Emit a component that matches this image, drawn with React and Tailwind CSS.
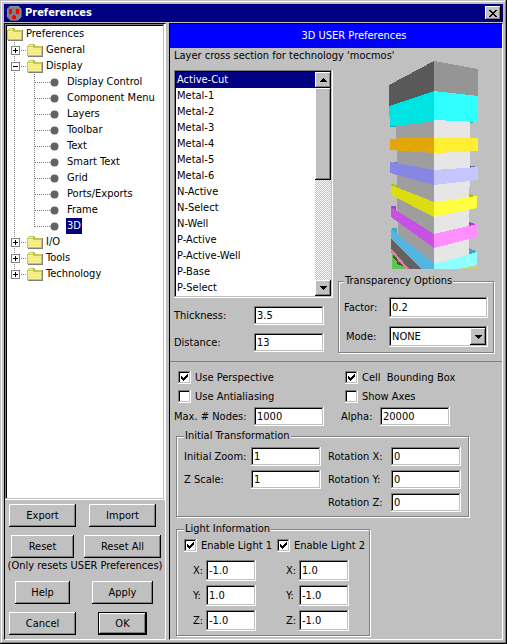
import React, { useState } from "react";

const raised =
  "bg-[#c0c0c0] shadow-[inset_-1px_-1px_0_#000,inset_1px_1px_0_#fff,inset_-2px_-2px_0_#808080]";
const sunken =
  "bg-white shadow-[inset_-1px_-1px_0_#fff,inset_1px_1px_0_#808080,inset_-2px_-2px_0_#c0c0c0,inset_2px_2px_0_#000]";
const panel = "border border-t-black border-l-black border-r-white border-b-white";

const layers = [
  "Active-Cut", "Metal-1", "Metal-2", "Metal-3", "Metal-4", "Metal-5", "Metal-6",
  "N-Active", "N-Select", "N-Well", "P-Active", "P-Active-Well", "P-Base", "P-Select",
];

const displayPages = [
  "Display Control", "Component Menu", "Layers", "Toolbar", "Text",
  "Smart Text", "Grid", "Ports/Exports", "Frame", "3D",
];

function Folder() {
  return (
    <svg width="16" height="16" viewBox="0 0 16 16" shapeRendering="crispEdges" className="shrink-0">
      <path d="M1 4V3h1V2h5v1h1v1h8v11H1z" fill="#808080" />
      <path d="M0 4h1V3h1V2h4v1h1v1h8v10H0z" fill="#c8c84c" />
      <path d="M1 6h13v7H1z" fill="#f7ef8c" />
      <path d="M1 5h5v1H1zM2 3h4v1H2z" fill="#fff9b0" />
      <path d="M3 8h1v1H3zM6 7h1v1H6zM9 8h1v1H9zM11 10h1v1h-1zM5 10h1v1H5zM8 11h1v1H8zM2 11h1v1H2zM12 7h1v1h-1z" fill="#e3d860" />
    </svg>
  );
}

function Expander({ open, last }) {
  return (
    <svg width="20" height="16" viewBox="0 0 20 16" shapeRendering="crispEdges" className="shrink-0">
      <path d={last ? "M7.5 0V4" : "M7.5 0V16"} stroke="#808080" strokeDasharray="1 1" />
      <path d="M14 8.5H20" stroke="#808080" strokeDasharray="1 1" />
      <rect x="4.500" y="4.500" width="8" height="8" fill="#fff" stroke="#808080" />
      <path d={open ? "M6 8.500H11" : "M6 8.500H11M8.500 6V11"} stroke="#000" />
    </svg>
  );
}

function LeafLines({ last }) {
  return (
    <svg width="59" height="16" viewBox="0 0 59 16" className="shrink-0">
      <g stroke="#808080" strokeDasharray="1 1" shapeRendering="crispEdges">
        <path d="M7.5 0V16" />
        <path d={last ? "M27.5 0V9" : "M27.5 0V16"} />
        <path d="M28 8.500H43" />
      </g>
      <circle cx="47.500" cy="8.500" r="4" fill="#636363" />
    </svg>
  );
}

function Branch({ name, open, last, children }) {
  return (
    <li>
      <div className="flex h-4 items-center">
        <Expander open={open} last={last} />
        <Folder />
        <span className="ml-[3px] leading-4">{name}</span>
      </div>
      {children}
    </li>
  );
}

function Tree() {
  return (
    <div className={`h-[476px] overflow-hidden p-[2px] ${sunken}`}>
      <div className="flex h-4 items-center">
        <Folder />
        <span className="ml-[3px] leading-4">Preferences</span>
      </div>
      <ul>
        <Branch name="General" />
        <Branch name="Display" open>
          <ul>
            {displayPages.map((p) => (
              <li key={p} className="flex h-4 items-center">
                <LeafLines last={p === "3D"} />
                <span className={p === "3D" ? "bg-[#000080] px-px leading-4 text-white" : "px-px leading-4"}>{p}</span>
              </li>
            ))}
          </ul>
        </Branch>
        <Branch name="I/O" />
        <Branch name="Tools" />
        <Branch name="Technology" last />
      </ul>
    </div>
  );
}

function Button({ className, children }) {
  return (
    <button type="button" className={`h-[23px] ${raised} ${className}`}>
      {children}
    </button>
  );
}

function Field({ id, label, value, labelClass, inputClass = "h-[19px] w-[70px]" }) {
  return (
    <div className="flex items-center">
      <label htmlFor={id} className={`shrink-0 whitespace-nowrap ${labelClass}`}>{label}</label>
      <input id={id} type="text" defaultValue={value} className={`min-w-0 px-[3px] outline-none ${sunken} ${inputClass}`} />
    </div>
  );
}

function Check({ label, on = false }) {
  const [checked, setChecked] = useState(on);
  return (
    <label className="flex h-[19px] items-center gap-1 whitespace-pre">
      <span className="grid shrink-0">
        <input
          type="checkbox"
          checked={checked}
          onChange={() => setChecked(!checked)}
          className={`col-start-1 row-start-1 size-[13px] appearance-none ${sunken}`}
        />
        {checked && (
          <svg width="13" height="13" viewBox="0 0 13 13" shapeRendering="crispEdges" className="pointer-events-none col-start-1 row-start-1">
            <path d="M3 5h1v1h1v1h1V6h1V5h1V4h1V3h1v3H9v1H8v1H7v1H6v1H5V9H4V8H3z" />
          </svg>
        )}
      </span>
      {label}
    </label>
  );
}

function Arrow({ up }) {
  return (
    <svg width="7" height="4" viewBox="0 0 7 4" shapeRendering="crispEdges">
      <path d={up ? "M3 0h1v1h1v1h1v1h1v1H0V3h1V2h1V1h1z" : "M0 0h7v1H6v1H5v1H4v1H3V3H2V2H1V1H0z"} />
    </svg>
  );
}

function LayerList() {
  const [selected, setSelected] = useState("Active-Cut");
  return (
    <div className={`flex w-[159px] p-[2px] ${sunken}`}>
      <ul role="listbox" aria-label="Layers" className="flex-1">
        {layers.map((l) => (
          <li
            key={l}
            role="option"
            aria-selected={l === selected}
            onClick={() => setSelected(l)}
            className={`h-4 pl-px leading-4 ${l === selected ? "bg-[#000080] text-white" : ""}`}
          >
            {l}
          </li>
        ))}
      </ul>
      <div className="flex w-4 flex-col bg-[repeating-conic-gradient(#fff_0_25%,#c0c0c0_0_50%)] bg-size-[2px_2px]">
        <button type="button" aria-label="Scroll up" className={`grid h-4 place-items-center ${raised}`}><Arrow up /></button>
        <div className={`h-[92px] ${raised}`} />
        <button type="button" aria-label="Scroll down" className={`mt-auto grid h-4 place-items-center ${raised}`}><Arrow /></button>
      </div>
    </div>
  );
}

function CrossSection() {
  return (
    <svg width="89" height="208" viewBox="0 0 89 208" shapeRendering="crispEdges">
      <path d="M7 55H45V208L9 180z" fill="#9e9e9e" />
      <path d="M45 55H81L80 200L45 208z" fill="#e6e6e6" />
      <path d="M0 24L45 0V31L0 45z" fill="#595959" />
      <path d="M45 0L89 8V35L45 30z" fill="#959595" />
      <path d="M1 64H7V66H1zM81 60H84V62H81z" fill="#00b5bd" />
      <path d="M0 45L45 30V60L7 65H1V56H0z" fill="#00e3e3" />
      <path d="M45 30L89 35V61L45 59z" fill="#30ffff" />
      <path d="M1 78L16 77H45V92L1 89z" fill="#e3a608" />
      <path d="M45 77H89V90L45 92z" fill="#ffee33" />
      <path d="M5 101H8V104H5zM81 105H86V108H81z" fill="#6c6cb8" />
      <path d="M1 101L45 109V124L1 112z" fill="#8686e3" />
      <path d="M45 109L89 106V119L45 124z" fill="#c6c6ff" />
      <path d="M2 123L8 124V130L2 126zM80 133L84 134V138L80 139z" fill="#b9b900" />
      <path d="M2 124L45 141V156L2 134z" fill="#dcdc12" />
      <path d="M45 141L88 135V147L45 156z" fill="#ffff40" />
      <path d="M2 145H7V150L2 148zM80 161L87 163V166L80 167z" fill="#a842be" />
      <path d="M2 146L45 173V187L2 156z" fill="#c552e3" />
      <path d="M45 173L88 163V176L45 187z" fill="#ff8eff" />
      <path d="M3 167H8V176L2 170zM80 187L87 190V193L80 195z" fill="#46a5cd" />
      <path d="M3 193L19 208H3z" fill="#5cc852" />
      <path d="M4 194L8 198L10 202L4 197zM8 201H12L16 206L8 203z" fill="#3c5a23" />
      <path d="M2 187L22 208H17L2 191z" fill="#e07f9e" />
      <path d="M2 177L34 208H20L2 187z" fill="#626262" />
      <path d="M2 168L46 203V208H32L2 178z" fill="#56b5e0" />
      <path d="M45 203L88 191V208H45z" fill="#90ffff" />
      <path d="M70 208L88 204V208z" fill="#d8c878" />
      <path d="M74 207.500H88M80 205.500H88" stroke="#90e0c8" strokeDasharray="1 2" />
    </svg>
  );
}

function Group({ title, className, children }) {
  return (
    <fieldset className={`min-w-0 border border-[#808080] shadow-[1px_1px_0_#fff,inset_1px_1px_0_#fff] ${className}`}>
      <legend className="h-[14px] bg-[#c0c0c0] px-px leading-[14px]">{title}</legend>
      {children}
    </fieldset>
  );
}

function Light({ n, values }) {
  return (
    <div className="w-[85px]">
      <Check label={`Enable Light ${n}`} on />
      <div className="mt-[5px] flex flex-col gap-1 pl-[9px]">
        {["X", "Y", "Z"].map((axis, i) => (
          <Field
            key={axis}
            id={`light-${n}-${axis}`}
            label={`${axis}:`}
            value={values[i]}
            labelClass="w-[13px]"
            inputClass="h-[21px] w-[50px]"
          />
        ))}
      </div>
    </div>
  );
}

export default function App() {
  return (
    <div className="flex min-h-screen flex-col bg-[#c0c0c0] p-1 font-['DejaVu_Sans_Condensed','DejaVu_Sans',sans-serif] text-[11px] leading-[14px] text-black shadow-[inset_-1px_-1px_0_#000,inset_1px_1px_0_#c0c0c0,inset_-2px_-2px_0_#808080,inset_2px_2px_0_#fff]">
      <header className="flex h-[18px] items-center bg-[#000080] px-[2px] text-white">
        <svg width="16" height="16" viewBox="0 0 16 16" shapeRendering="crispEdges">
          <path d="M4 1h8l3 3v8l-3 3H4l-3-3V4z" fill="#808080" stroke="#a0a0a0" strokeWidth=".5" />
          <path d="M3 4h3v5H3zM10 4h3v5h-3zM7 10h2v1h1v3H6v-3h1z" fill="#f00" />
        </svg>
        <h1 className="ml-[3px] flex-1 font-bold">Preferences</h1>
        <button type="button" aria-label="Close" className={`grid h-[14px] w-4 place-items-center ${raised}`}>
          <svg width="8" height="7" viewBox="0 0 8 7" shapeRendering="crispEdges">
            <path d="M0 0h2v1h1v1h2V1h1V0h2v1H7v1H6v1H5v1h1v1h1v1h1v1H6V6H5V5H3v1H2v1H0V6h1V5h1V4h1V3H2V2H1V1H0z" />
          </svg>
        </button>
      </header>

      <main className="mt-px flex flex-1 gap-[3px]">
        <aside className={`w-[162px] shrink-0 ${panel}`}>
          <Tree />
          <div className="grid grid-cols-[75px_1fr] justify-items-center gap-y-2 pt-1">
            <Button className="w-[67px]">Export</Button>
            <Button className="w-[67px]">Import</Button>
            <Button className="w-[63px]">Reset</Button>
            <Button className="w-[77px]">Reset All</Button>
            <p className="col-span-2 -mt-2 h-[15px] whitespace-nowrap leading-[15px]">(Only resets USER Preferences)</p>
            <Button className="w-[55px]">Help</Button>
            <Button className="w-[61px]">Apply</Button>
            <Button className="w-[67px]">Cancel</Button>
            <button type="submit" className="h-[23px] w-[49px] border border-black bg-[#c0c0c0] shadow-[inset_-1px_-1px_0_#000,inset_1px_1px_0_#fff,inset_-2px_-2px_0_#808080]">
              OK
            </button>
          </div>
        </aside>

        <section className={`min-w-0 flex-1 ${panel}`}>
          <h2 className="flex h-6 items-center justify-center bg-[#0000ff] pl-9 text-white">3D USER Preferences</h2>

          <div className="border-b border-[#808080] px-1 pb-2">
            <p className="h-[15px] whitespace-nowrap leading-[15px]">Layer cross section for technology 'mocmos'</p>
            <div className="mt-[7px] flex gap-[5px]">
              <div className="flex flex-col gap-2">
                <LayerList />
                <Field id="thickness" label="Thickness:" value="3.5" labelClass="w-20" />
                <Field id="distance" label="Distance:" value="13" labelClass="w-20" />
              </div>
              <div className="mr-1 -mt-[9px] flex min-w-0 flex-1 flex-col">
                <div className="flex justify-center pl-[35px]">
                  <CrossSection />
                </div>
                <Group title="Transparency Options" className="mt-[5px] px-[5px] pb-[5px]">
                  <div className="flex flex-col gap-2 pt-[9px]">
                    <Field id="factor" label="Factor:" value="0.2" labelClass="w-[45px]" inputClass="h-[21px] w-full" />
                    <div className="flex items-center">
                      <label htmlFor="mode" className="w-[45px] shrink-0 pl-[2px]">Mode:</label>
                      <div className={`flex h-[21px] min-w-0 flex-1 p-[2px] ${sunken}`}>
                        <select id="mode" defaultValue="NONE" className="min-w-0 flex-1 appearance-none bg-transparent pl-px outline-none">
                          <option>NONE</option>
                        </select>
                        <span className={`pointer-events-none grid w-4 place-items-center ${raised}`}><Arrow /></span>
                      </div>
                    </div>
                  </div>
                </Group>
              </div>
            </div>
          </div>

          <div className="px-1 pt-[6px]">
            <div className="grid grid-cols-[167px_1fr] pl-1">
              <Check label="Use Perspective" on />
              <Check label="Cell  Bounding Box" on />
              <Check label="Use Antialiasing" />
              <Check label="Show Axes" />
            </div>
            <div className="mt-px flex gap-[17px]">
              <Field id="nodes" label="Max. # Nodes:" value="1000" labelClass="w-20" />
              <Field id="alpha" label="Alpha:" value="20000" labelClass="w-[39px]" />
            </div>

            <Group title="Initial Transformation" className="mt-[3px] ml-[2px] w-fit px-[7px] pb-1">
              <div className="flex gap-[7px] pt-1">
                <div className="flex flex-col gap-1">
                  <Field id="zoom" label="Initial Zoom:" value="1" labelClass="w-[67px]" />
                  <Field id="zscale" label="Z Scale:" value="1" labelClass="w-[67px]" />
                </div>
                <div className="flex flex-col gap-1">
                  <Field id="rotx" label="Rotation X:" value="0" labelClass="w-[63px]" />
                  <Field id="roty" label="Rotation Y:" value="0" labelClass="w-[63px]" />
                  <Field id="rotz" label="Rotation Z:" value="0" labelClass="w-[63px]" />
                </div>
              </div>
            </Group>

            <Group title="Light Information" className="mt-[5px] ml-[2px] w-[194px] px-[7px] pb-1">
              <div className="flex gap-2">
                <Light n={1} values={["-1.0", "1.0", "-1.0"]} />
                <Light n={2} values={["1.0", "-1.0", "-1.0"]} />
              </div>
            </Group>
          </div>
        </section>
      </main>
    </div>
  );
}
